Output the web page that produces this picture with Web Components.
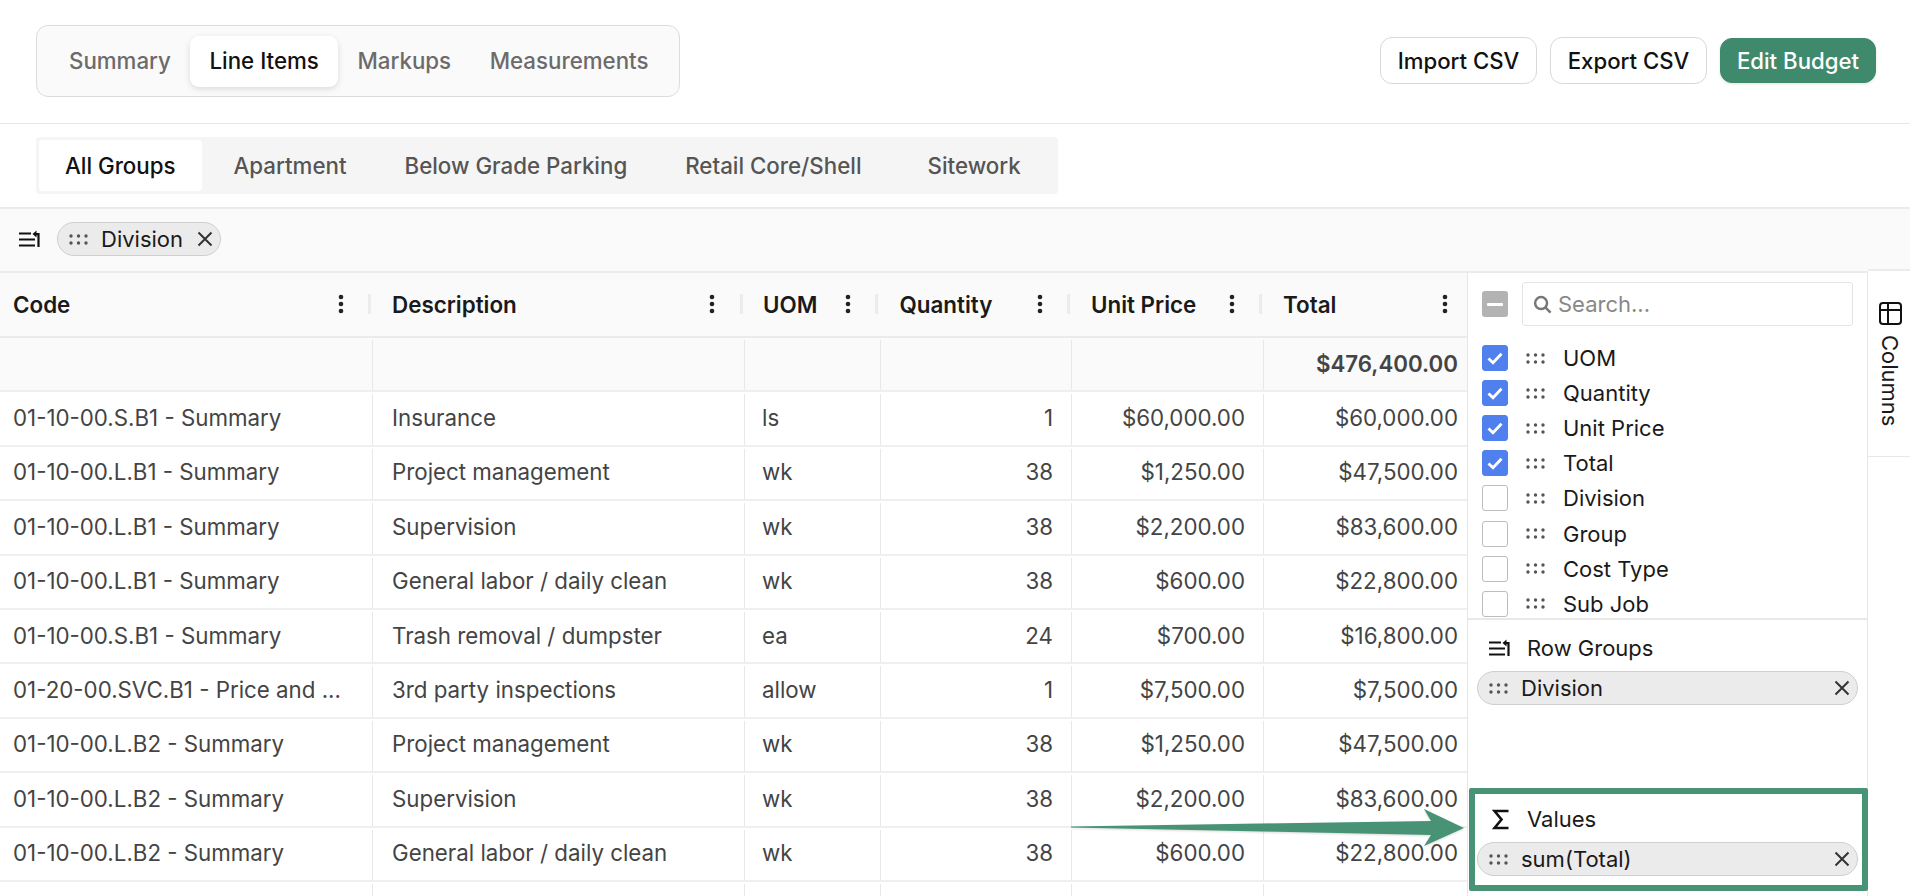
<!DOCTYPE html>
<html>
<head>
<meta charset="utf-8">
<title>Budget</title>
<style>
  html, body { margin: 0; height: 100%; overflow: hidden; background: #fff; font-family: Inter, "Liberation Sans", sans-serif; }
  budget-page { height: 896px; }
</style>
</head>
<body>
<budget-page></budget-page>
<script>
const ICONS = {
  dots: `<svg width="19" height="11" viewBox="0 0 19 11" fill="#555"><circle cx="2" cy="2" r="1.7"/><circle cx="9.5" cy="2" r="1.7"/><circle cx="17" cy="2" r="1.7"/><circle cx="2" cy="9" r="1.7"/><circle cx="9.5" cy="9" r="1.7"/><circle cx="17" cy="9" r="1.7"/></svg>`,
  close: `<svg width="16" height="16" viewBox="0 0 16 16" fill="none" stroke="#333" stroke-width="2"><path d="M1.5 1.5l13 13M14.5 1.5l-13 13"/></svg>`,
  group: `<svg width="23" height="18" viewBox="0 0 23 18" fill="none" stroke="#111" stroke-width="2.2"><path d="M0 3.5h12M0 9.5h16M0 15.5h16"/><path d="M19.5 17V4.2h-4"/><path d="M17.5 0.6v7l-4-3.5z" fill="#111" stroke="none"/></svg>`,
  sigma: `<svg width="17" height="21" viewBox="0 0 17 21" fill="none" stroke="#111" stroke-width="2.6"><path d="M16.5 2H2.5l7 8.5-7 8.5h14"/></svg>`,
  kebab: `<svg width="6" height="20" viewBox="0 0 6 20" fill="#222"><circle cx="3" cy="3" r="2.3"/><circle cx="3" cy="10" r="2.3"/><circle cx="3" cy="17" r="2.3"/></svg>`,
  search: `<svg width="19" height="19" viewBox="0 0 20 20" fill="none" stroke="#777" stroke-width="2.6"><circle cx="8.5" cy="8.5" r="6.3"/><path d="M13 13l5.5 5.5"/></svg>`,
  columns: `<svg width="23" height="23" viewBox="0 0 23 23" fill="none" stroke="#111" stroke-width="2"><rect x="1" y="1" width="21" height="21" rx="3"/><path d="M1 8h21M9 1v21"/></svg>`,
  check: `<svg width="16" height="13" viewBox="0 0 16 13" fill="none" stroke="#fff" stroke-width="2.8"><path d="M1.5 6.5l4.5 4.3 8.5-9"/></svg>`
};

class PillTabs extends HTMLElement {
  constructor() {
    super();
    this.attachShadow({ mode: "open" });
    const items = this.getAttribute("items").split("|");
    const active = this.getAttribute("active");
    this.shadowRoot.innerHTML = `
      <style>
        :host { display: inline-flex; box-sizing: border-box; height: 72px; width: 644px; padding: 10px 14px 9px 12.7px;
          background: #fafafa; border: 1px solid #dcdcdc; border-radius: 12px; font-size: 22.3px; font-weight: 500; color: #6b6b6b; }
        span { display: flex; align-items: center; padding: 0 19.3px 1px; border-radius: 9px; white-space: nowrap; }
        span.active { background: #fff; color: #111; box-shadow: 0 2px 6px rgba(0,0,0,.13); }
      </style>
      ${items.map(t => `<span class="${t == active ? "active" : ""}">${t}</span>`).join("")}`;
  }
}
customElements.define("pill-tabs", PillTabs);

class GroupTabs extends HTMLElement {
  constructor() {
    super();
    this.attachShadow({ mode: "open" });
    const items = this.getAttribute("items").split("|");
    const active = this.getAttribute("active");
    this.shadowRoot.innerHTML = `
      <style>
        :host { display: inline-flex; box-sizing: border-box; height: 57px; width: 1022px; padding: 3px; background: #f5f5f5; border-radius: 4px;
          font-size: 22.3px; font-weight: 500; color: #555; }
        span { display: flex; align-items: center; padding: 0 26px; margin-right: 6px; border-radius: 4px; white-space: nowrap; }
        span:last-of-type { margin-left: 8px; }
        span.active { background: #fff; color: #111; }
      </style>
      ${items.map(t => `<span class="${t == active ? "active" : ""}">${t}</span>`).join("")}`;
  }
}
customElements.define("group-tabs", GroupTabs);

class ActionButton extends HTMLElement {
  constructor() {
    super();
    this.attachShadow({ mode: "open" });
    this.shadowRoot.innerHTML = `
      <style>
        :host { display: inline-flex; align-items: center; justify-content: center; box-sizing: border-box; width: 157px; height: 47px;
          border: 1px solid #d8d8d8; border-radius: 12px; background: #fff; font-size: 22.2px; font-weight: 500; color: #111; }
        :host([primary]) { width: 156px; background: #3f8a6d; border-color: #3f8a6d; color: #fff; height: 45px; box-shadow: 0 1px 3px rgba(0,0,0,.12); }
      </style>
      <slot></slot>`;
  }
}
customElements.define("action-button", ActionButton);

class GroupChip extends HTMLElement {
  constructor() {
    super();
    this.attachShadow({ mode: "open" });
    this.shadowRoot.innerHTML = `
      <style>
        :host { display: flex; align-items: center; flex: none; box-sizing: border-box; height: 34px; padding: 0 7px 0 11px; background: #ebebeb;
          border: 1px solid #cfcfcf; border-radius: 17px; font-size: 22px; color: #1a1a1a; }
        .label { margin-left: 13px; flex: 1; white-space: nowrap; }
        .x { display: flex; margin-left: 10px; }
        .grip { display: flex; }
      </style>
      <span class="grip">${ICONS.dots}</span><span class="label"><slot></slot></span><span class="x">${ICONS.close}</span>`;
  }
}
customElements.define("group-chip", GroupChip);

class PivotBar extends HTMLElement {
  constructor() {
    super();
    this.attachShadow({ mode: "open" });
    this.shadowRoot.innerHTML = `
      <style>
        :host { display: flex; align-items: center; flex: none; gap: 15px; box-sizing: border-box; height: 64px; padding: 0 0 2px 19px;
          background: #fafafa; border-top: 2px solid #ebebeb; }
        group-chip { width: 164px; }
        span { display: flex; }
      </style>
      <span>${ICONS.group}</span><group-chip>Division</group-chip>`;
  }
}
customElements.define("pivot-bar", PivotBar);

const COLS = "372px 372px 135.5px 191.5px 192px 204px";

class GridHeader extends HTMLElement {
  constructor() {
    super();
    this.attachShadow({ mode: "open" });
    const cols = [["Code", 13, 341, 369], ["Description", 20, 340, 369], ["UOM", 19, 103.5, 132], ["Quantity", 20, 160.5, 188.5], ["Unit Price", 20, 160.5, 189], ["Total", 20, 182, 0]];
    this.shadowRoot.innerHTML = `
      <style>
        :host { display: grid; flex: none; grid-template-columns: ${COLS}; box-sizing: border-box; height: 67px; background: #fafafa;
          border-top: 2px solid #ebebeb; border-bottom: 2px solid #ebebeb; font-size: 22.4px; font-weight: 600; color: #1a1a1a; }
        div { position: relative; display: flex; align-items: center; }
        svg { position: absolute; top: 21px; }
        i { position: absolute; top: 21px; width: 3px; height: 20px; background: #ececec; }
      </style>
      ${cols.map(c => `<div style="padding-left:${c[1]}px"><span>${c[0]}</span>
        ${ICONS.kebab.replace("<svg", `<svg style="left:${c[2] - 3}px"`)}${c[3] ? `<i style="left:${c[3] - 1}px"></i>` : ""}</div>`).join("")}`;
  }
}
customElements.define("grid-header", GridHeader);

class GridRow extends HTMLElement {
  constructor() {
    super();
    this.attachShadow({ mode: "open" });
    const cells = (this.getAttribute("cells") || "|||||").split("|");
    this.shadowRoot.innerHTML = `
      <style>
        :host { display: grid; flex: none; grid-template-columns: ${COLS}; box-sizing: border-box; height: 54.4px; background: #fff;
          border-bottom: 2px solid #efefef; font-size: 22.3px; color: #444; }
        :host([total]) { background: #fafafa; font-weight: 600; }
        div { display: flex; align-items: center; box-sizing: border-box; margin-top: 2px; padding: 0 0 4px 19px; border-left: 1px solid #e8e8e8; white-space: nowrap; overflow: hidden; }
        div:first-of-type { padding-left: 13px; border-left: 0; }
        div:nth-of-type(3) { padding-left: 17px; }
        div.num { justify-content: flex-end; padding: 0 18px 4px 0; }
        div:last-child { padding-right: 9px; }
      </style>
      ${cells.map((c, i) => `<div class="${i >= 3 ? "num" : ""}"><span>${c}</span></div>`).join("")}`;
  }
}
customElements.define("grid-row", GridRow);

class ColumnOption extends HTMLElement {
  constructor() {
    super();
    this.attachShadow({ mode: "open" });
    const on = this.hasAttribute("checked");
    this.shadowRoot.innerHTML = `
      <style>
        :host { display: flex; align-items: center; flex: none; height: 35.1px; padding-left: 14px; font-size: 22px; color: #1a1a1a; }
        .box { display: flex; align-items: center; justify-content: center; box-sizing: border-box; width: 26px; height: 26px; border-radius: 3px;
          background: #fff; border: 1px solid #bdbdbd; }
        .box.on { background: #4f80ee; border-color: #4f80ee; }
        .grip { display: flex; margin-left: 18px; }
        .label { margin-left: 18px; white-space: nowrap; }
      </style>
      <span class="box ${on ? "on" : ""}">${on ? ICONS.check : ""}</span>
      <span class="grip">${ICONS.dots}</span><span class="label"><slot></slot></span>`;
  }
}
customElements.define("column-option", ColumnOption);

class ColumnPanel extends HTMLElement {
  constructor() {
    super();
    this.attachShadow({ mode: "open" });
    this.shadowRoot.innerHTML = `
      <style>
        :host { display: flex; flex-direction: column; flex: none; box-sizing: border-box; width: 401px; background: #fff;
          border-top: 2px solid #ebebeb; border-left: 1px solid #e6e6e6; border-right: 1px solid #e6e6e6; }
        .list { display: flex; flex-direction: column; flex: none; box-sizing: border-box; height: 347px; overflow: hidden; border-bottom: 2px solid #e8e8e8; }
        .top { display: flex; align-items: flex-start; flex: none; box-sizing: border-box; height: 67.5px; padding: 9px 14px 0; }
        .minus { display: flex; align-items: center; justify-content: center; flex: none; width: 26px; height: 26px; margin-top: 9px; background: #b3b3b3; border-radius: 3px; }
        .minus::before { content: ""; width: 16px; height: 3px; background: #fff; border-radius: 1px; }
        .search { display: flex; align-items: center; gap: 6px; flex: 1; box-sizing: border-box; height: 44px; margin-left: 14px; padding-left: 10px;
          border: 1px solid #e4e4e4; border-radius: 3px; font-size: 22px; color: #888; }
        .search svg { display: block; }
        section { display: flex; flex-direction: column; flex: none; padding: 11px 9px 0 9px; box-sizing: border-box; }
        section.rows { height: 170px; padding-top: 10px; }
        h3 { display: flex; align-items: center; height: 36px; margin: 0 0 5px; padding-left: 12px; font-size: 22px; font-weight: 400; color: #1a1a1a; }
        h3 .ic { display: flex; justify-content: center; width: 23px; margin-right: 15px; }
      </style>
      <div class="list">
        <div class="top"><span class="minus"></span><div class="search">${ICONS.search}<span>Search...</span></div></div>
        <column-option checked>UOM</column-option>
        <column-option checked>Quantity</column-option>
        <column-option checked>Unit Price</column-option>
        <column-option checked>Total</column-option>
        <column-option>Division</column-option>
        <column-option>Group</column-option>
        <column-option>Cost Type</column-option>
        <column-option>Sub Job</column-option>
      </div>
      <section class="rows"><h3><span class="ic">${ICONS.group}</span>Row Groups</h3><group-chip>Division</group-chip></section>
      <section class="vals"><h3><span class="ic">${ICONS.sigma}</span>Values</h3><group-chip>sum(Total)</group-chip></section>`;
  }
}
customElements.define("column-panel", ColumnPanel);

class SideTab extends HTMLElement {
  constructor() {
    super();
    this.attachShadow({ mode: "open" });
    this.shadowRoot.innerHTML = `
      <style>
        :host { display: block; flex: none; width: 42px; background: #fff; border-top: 2px solid #ebebeb; margin-top: -2px; }
        .tab { display: flex; flex-direction: column; align-items: center; gap: 10px; box-sizing: border-box; height: 186px; padding: 31px 0 0 2px;
          border-bottom: 1px solid #e8e8e8; font-size: 22px; color: #1a1a1a; }
        svg { display: block; flex: none; }
        span { writing-mode: vertical-rl; line-height: 26px; }
      </style>
      <div class="tab">${ICONS.columns}<span>Columns</span></div>`;
  }
}
customElements.define("side-tab", SideTab);

class BudgetPage extends HTMLElement {
  constructor() {
    super();
    this.attachShadow({ mode: "open" });
    const rows = [
      "01-10-00.S.B1 - Summary|Insurance|ls|1|$60,000.00|$60,000.00",
      "01-10-00.L.B1 - Summary|Project management|wk|38|$1,250.00|$47,500.00",
      "01-10-00.L.B1 - Summary|Supervision|wk|38|$2,200.00|$83,600.00",
      "01-10-00.L.B1 - Summary|General labor / daily clean|wk|38|$600.00|$22,800.00",
      "01-10-00.S.B1 - Summary|Trash removal / dumpster|ea|24|$700.00|$16,800.00",
      "01-20-00.SVC.B1 - Price and ...|3rd party inspections|allow|1|$7,500.00|$7,500.00",
      "01-10-00.L.B2 - Summary|Project management|wk|38|$1,250.00|$47,500.00",
      "01-10-00.L.B2 - Summary|Supervision|wk|38|$2,200.00|$83,600.00",
      "01-10-00.L.B2 - Summary|General labor / daily clean|wk|38|$600.00|$22,800.00",
      "|||||"
    ];
    this.shadowRoot.innerHTML = `
      <style>
        :host { display: flex; flex-direction: column; position: relative; overflow: hidden; }
        header { display: flex; align-items: center; flex: none; box-sizing: border-box; height: 124px; padding: 0 34px 2px 36px; border-bottom: 1px solid #e6e6e6; }
        .actions { display: flex; align-items: center; gap: 13px; margin-left: auto; }
        .groups { flex: none; display: flex; height: 83px; box-sizing: border-box; padding: 13px 0 0 36px; }
        main { display: flex; flex: 1; min-height: 0; }
        .grid { flex: 1; min-width: 0; display: flex; flex-direction: column; overflow: hidden; }
        .callout { position: absolute; left: 1469px; top: 788px; width: 399px; height: 103px; box-sizing: border-box; border: 6px solid #489375; border-radius: 2px; }
        .arrow { position: absolute; left: 1070px; top: 805px; filter: drop-shadow(0 1px 1px rgba(0,0,0,.15)); }
      </style>
      <header>
        <pill-tabs items="Summary|Line Items|Markups|Measurements" active="Line Items"></pill-tabs>
        <div class="actions">
          <action-button>Import CSV</action-button>
          <action-button>Export CSV</action-button>
          <action-button primary>Edit Budget</action-button>
        </div>
      </header>
      <div class="groups"><group-tabs items="All Groups|Apartment|Below Grade Parking|Retail Core/Shell|Sitework" active="All Groups"></group-tabs></div>
      <pivot-bar></pivot-bar>
      <main>
        <div class="grid">
          <grid-header></grid-header>
          <grid-row total cells="|||||$476,400.00"></grid-row>
          ${rows.map(r => `<grid-row cells="${r}"></grid-row>`).join("")}
        </div>
        <column-panel></column-panel>
        <side-tab></side-tab>
      </main>
      <div class="callout"></div>
      <svg class="arrow" width="400" height="46" viewBox="1070 805 400 46"><polygon fill="#489375" points="1071,826.5 1431,821 1424,809 1464,828 1424,846 1431,835 1071,827.5"/></svg>`;
  }
}
customElements.define("budget-page", BudgetPage);
</script>
</body>
</html>
